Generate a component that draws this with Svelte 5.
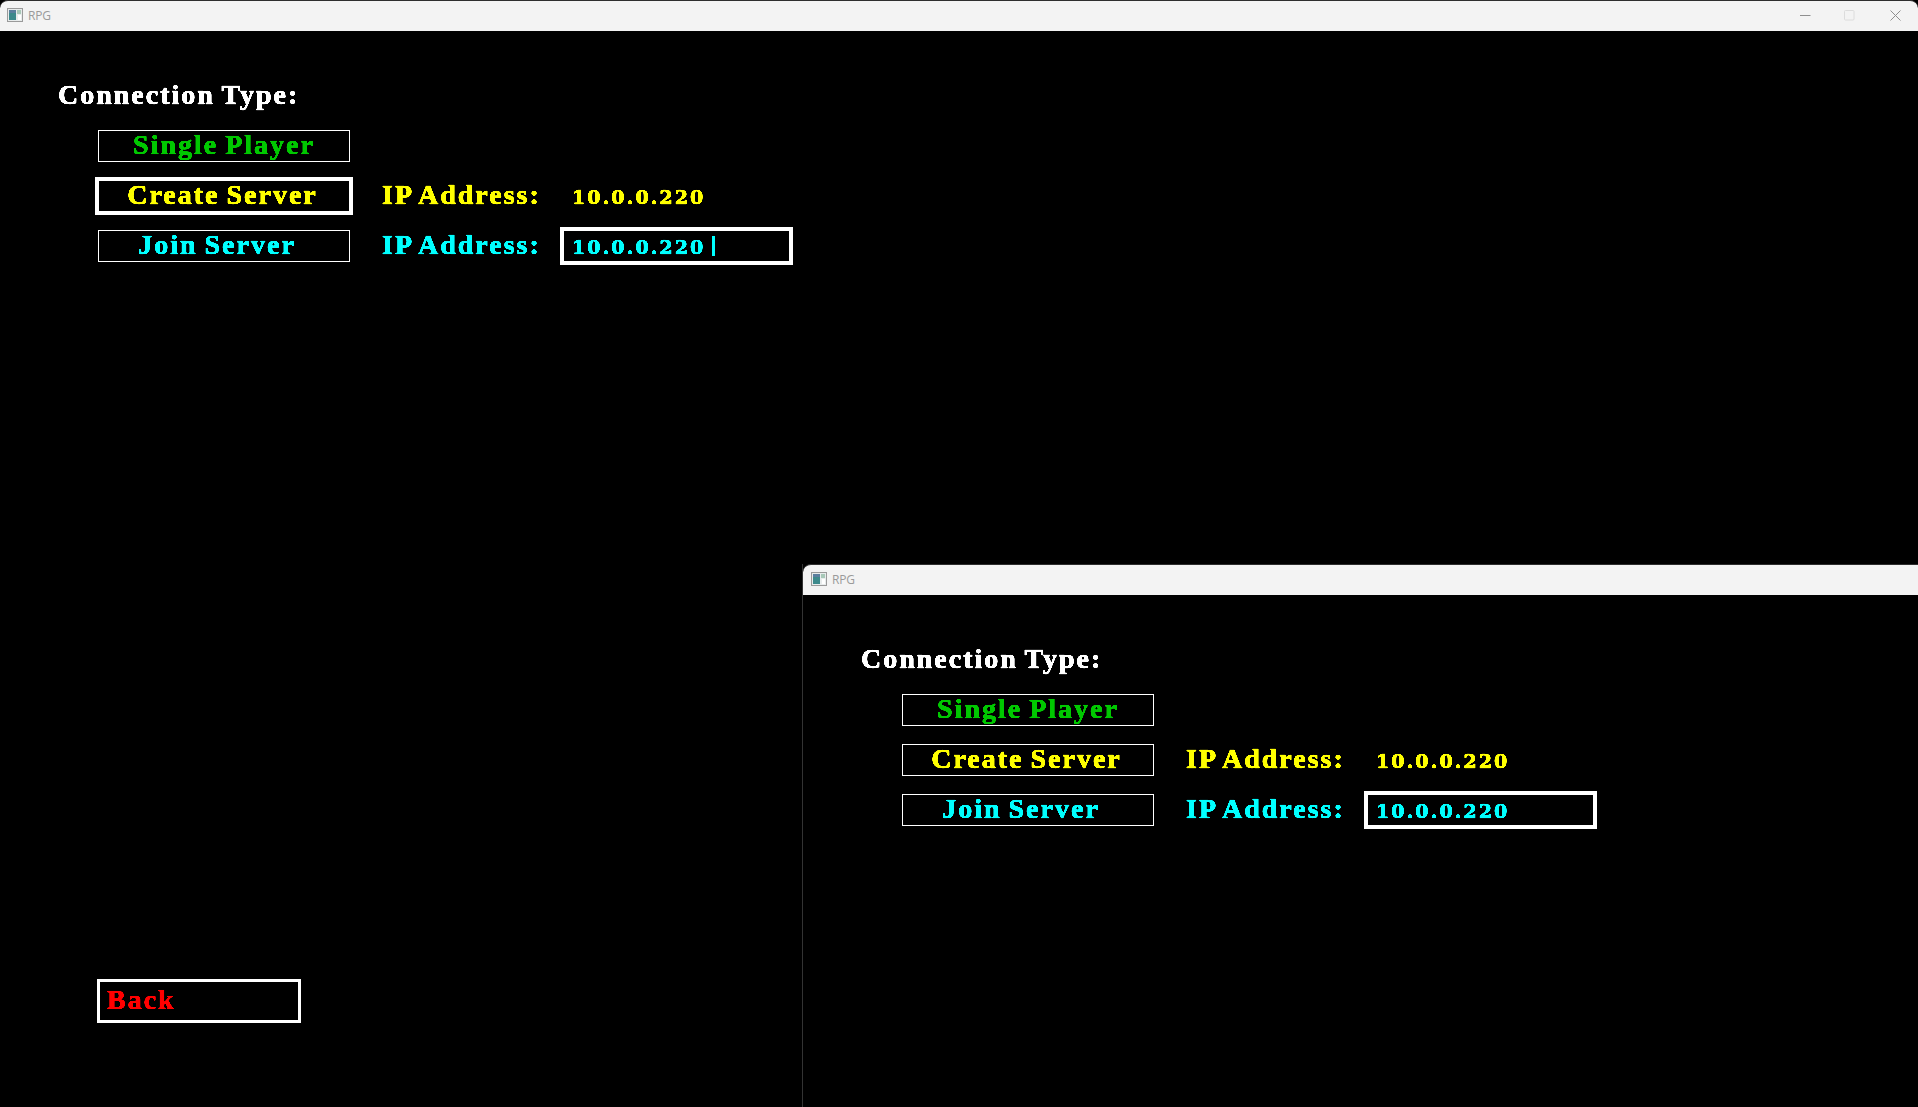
<script>
  const ip = '10.0.0.220';
</script>

{#snippet titlebar(controls)}
  <div class="titlebar">
    <svg class="appicon" width="16" height="14" viewBox="0 0 16 14">
      <rect x="0.5" y="0.5" width="15" height="13" fill="#e8ecec" stroke="#9a9a9a" />
      <rect x="2" y="2" width="7" height="10" fill="#3d8a8c" />
      <rect x="2" y="2" width="7" height="3" fill="#5b7f9e" />
      <rect x="10" y="2" width="4" height="4" fill="#a8c8b8" />
      <rect x="11" y="7" width="3" height="5" fill="#ffffff" />
    </svg>
    <span class="title">RPG</span>
    {#if controls}
      <div class="controls">
        <svg class="min" width="11" height="11" viewBox="0 0 11 11"><path d="M0 5.5H10.5" stroke="#8f8f8f" /></svg>
        <svg width="11" height="11" viewBox="0 0 11 11"><rect x="0.5" y="0.5" width="9.5" height="9.5" rx="1" fill="none" stroke="#dcdcdc" /></svg>
        <svg width="11" height="11" viewBox="0 0 11 11"><path d="M0.5 0.5L10.5 10.5M10.5 0.5L0.5 10.5" stroke="#8f8f8f" /></svg>
      </div>
    {/if}
  </div>
{/snippet}

{#snippet connection(createFocused, caret)}
  <div class="heading">Connection Type:</div>
  <div class="rows">
    <div class="row green">
      <div class="box btn">Single Player</div>
    </div>
    <div class="row yellow">
      <div class="box btn create" class:focus={createFocused}>Create Server</div>
      <div class="label">IP Address:</div>
      <div class="value"><span class="num">{ip}</span></div>
    </div>
    <div class="row cyan">
      <div class="box btn join">Join Server</div>
      <div class="label">IP Address:</div>
      <div class="box value input focus">
        <span class="num">{ip}</span>{#if caret}<span class="caret"></span>{/if}
      </div>
    </div>
  </div>
{/snippet}

<svg class="defs" width="0" height="0">
  <filter id="crisp" x="0" y="0" width="100%" height="100%">
    <feComponentTransfer>
      <feFuncA type="linear" slope="2.4" intercept="-0.6" />
    </feComponentTransfer>
  </filter>
</svg>

<div class="desktop">
  <section class="window main">
    {@render titlebar(true)}
    <div class="body">
      {@render connection(true, true)}
      <div class="box back">Back</div>
    </div>
  </section>

  <section class="window second">
    {@render titlebar(false)}
    <div class="body">
      {@render connection(false, false)}
    </div>
  </section>
</div>

<style>
  :global(body) {
    background: #000;
  }

  .defs {
    position: absolute;
  }

  .desktop {
    position: relative;
    height: 100vh;
    overflow: hidden;
    background: #000;
  }

  .window {
    display: flex;
    flex-direction: column;
    background: #000;
  }

  .main {
    height: 100%;
  }

  /* second game window sits over the first one, running off the screen */
  .second {
    position: absolute;
    left: 803px;
    top: 564px;
    width: 1140px;
    height: 543px;
    box-shadow: -1px 0 0 #333;
  }

  .titlebar {
    height: 28px;
    padding-bottom: 2px;
    flex: none;
    display: flex;
    align-items: center;
    padding-left: 7px;
    background: #f3f3f3;
    border-top: 1px solid #2e2e2e;
    border-radius: 8px 8px 0 0;
    font: 12px "Open Sans", sans-serif;
    color: #9a9a9a;
  }

  .second .titlebar {
    padding-left: 8px;
  }

  .title {
    margin-left: 5px;
    letter-spacing: -0.2px;
  }

  .appicon {
    flex: none;
  }

  .controls {
    margin-left: auto;
    display: flex;
    gap: 35px;
    padding-right: 17px;
  }

  .min {
    margin-right: -2px;
  }

  .body {
    flex: 1;
    display: flex;
    flex-direction: column;
    padding: 47px 0 84px 58px;
    color: #fff;
    font-family: "Liberation Serif", serif;
    font-weight: 700;
    font-size: 28px;
    letter-spacing: 2px;
    word-spacing: -2px;
    -webkit-text-stroke: 0.6px currentColor;
    filter: url(#crisp);
  }

  .heading {
    height: 34px;
    line-height: 34px;
  }

  .rows {
    display: flex;
    flex-direction: column;
    gap: 18px;
    margin: 18px 0 0 40px;
  }

  .second .rows {
    margin-left: 41px;
  }

  .row {
    display: flex;
    align-items: center;
    height: 32px;
  }

  .green {
    color: #00c800;
  }

  .yellow {
    color: #ffff00;
  }

  .cyan {
    color: #00ffff;
  }

  .box {
    box-sizing: border-box;
    height: 32px;
    border: 1px solid #fff;
    line-height: 28px;
  }

  .focus {
    outline: 3px solid #fff;
  }

  .btn {
    width: 252px;
    margin-right: 32px;
    text-align: center;
  }

  .create {
    padding-right: 3px;
  }

  .join {
    padding-right: 14px;
  }

  .label {
    width: 181px;
    line-height: 30px;
    height: 32px;
  }

  .value {
    display: flex;
    align-items: center;
    padding-left: 9px;
  }

  .input {
    box-sizing: border-box;
    width: 227px;
    padding-left: 8px;
  }

  .num {
    font-family: "DejaVu Serif", serif;
    font-size: 19px;
    letter-spacing: 2.1px;
    position: relative;
    top: 1px;
  }

  .caret {
    width: 3px;
    height: 20px;
    margin-left: 7px;
    background: #00ffff;
  }

  .back {
    margin-top: auto;
    margin-left: 39px;
    width: 204px;
    height: 44px;
    border-width: 3px;
    padding-left: 7px;
    line-height: 35px;
    color: #ff0000;
  }
</style>
